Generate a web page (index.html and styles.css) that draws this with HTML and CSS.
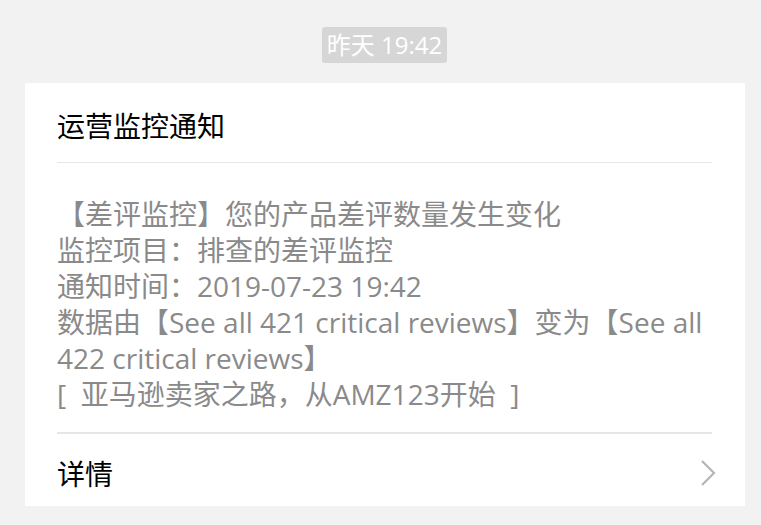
FILE: index.html
```html
<!DOCTYPE html>
<html lang="zh-CN">
<head>
  <meta charset="UTF-8">
  <title>运营监控通知</title>
  <link rel="stylesheet" href="styles.css">
</head>
<body>
  <div class="time-row">
    <span class="time">昨天 19:42</span>
  </div>

  <div class="card">
    <div class="card-title">运营监控通知</div>
    <div class="card-body">
      <p>【差评监控】您的产品差评数量发生变化</p>
      <p>监控项目：排查的差评监控</p>
      <p>通知时间：2019-07-23 19:42</p>
      <p>数据由【See all 421 critical reviews】变为【See all 422 critical reviews】</p>
      <p>[&nbsp; 亚马逊卖家之路，从AMZ123开始 &nbsp;]</p>
    </div>
    <div class="card-foot">
      <span>详情</span>
      <svg class="arrow" width="16" height="28" viewBox="0 0 16 28">
        <path d="M2 2 L14 14 L2 26" fill="none" stroke="#b5b5b5" stroke-width="2.2"/>
      </svg>
    </div>
  </div>
</body>
</html>
```

FILE: styles.css
```css
body {
  margin: 0;
  background-color: #f2f2f2;
  font-family: 'Open Sans', 'Noto Sans CJK SC', sans-serif;
}

.time-row {
  display: flex;
  justify-content: center;
  padding-top: 27px;
  padding-left: 8px;
}

.time {
  background-color: #d6d6d6;
  color: #fff;
  font-size: 24px;
  line-height: 36px;
  height: 36px;
  padding: 0 5px;
  border-radius: 3px;
}

.card {
  margin: 20px 16px 0 25px;
  background-color: #fff;
  padding: 0 33px 0 32px;
}

.card-title {
  height: 80px;
  display: flex;
  align-items: center;
  padding-top: 4px;
  box-sizing: border-box;
  font-size: 28px;
  color: #000;
  border-bottom: 1px solid #e6e6e6;
}

.card-body {
  padding: 33px 0 20px;
  border-bottom: 2px solid #e6e6e6;
  color: #8a8a8a;
  font-size: 28px;
  line-height: 36px;
}

.card-body p {
  margin: 0;
}

.card-foot {
  height: 72px;
  display: flex;
  align-items: center;
  justify-content: space-between;
  padding-top: 5px;
  box-sizing: border-box;
  font-size: 28px;
  color: #000;
}

.arrow {
  margin-right: -4px;
}
```
